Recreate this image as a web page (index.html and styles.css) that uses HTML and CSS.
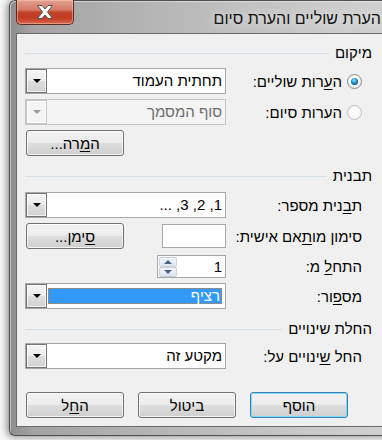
FILE: index.html
```html
<!DOCTYPE html>
<html lang="he">

<head>
    <meta charset="UTF-8">
    <title>הערת שוליים והערת סיום</title>
    <link rel="stylesheet" href="styles.css">
</head>

<body>

    <div class="window">
        <div class="titlebar">
            <div class="close-btn">
                <svg width="18" height="14" viewBox="0 0 18 14">
                    <path d="M1.5 0.5 H6 L9 4 L12 0.5 H16.5 L11.5 7 L16.5 13.5 H12 L9 10 L6 13.5 H1.5 L6.5 7 Z" fill="#fafafa" stroke="#555" stroke-width="1" stroke-linejoin="round" />
                </svg>
            </div>
            <div class="title" dir="rtl">הערת שוליים והערת סיום</div>
        </div>

        <div class="client" dir="rtl">
            <!-- Location -->
            <div class="group-head head-location"><span>מיקום</span><div class="line"></div></div>

            <div class="row row-footnotes">
                <label class="lbl radio-lbl"><span class="radio on"></span><span>ה<u>ע</u>רות שוליים:</span></label>
                <div class="combo">
                    <span class="combo-text">תחתית העמוד</span>
                    <span class="combo-btn"><i class="arrow"></i></span>
                </div>
            </div>

            <div class="row row-endnotes">
                <label class="lbl radio-lbl"><span class="radio off"></span><span>הערות סיום:</span></label>
                <div class="combo disabled">
                    <span class="combo-text">סוף המסמך</span>
                    <span class="combo-btn"><i class="arrow"></i></span>
                </div>
            </div>

            <div class="row row-convert">
                <span class="lbl"></span>
                <div class="ctrl ctrl-left">
                    <button class="btn">ה<u>מ</u>רה...</button>
                </div>
            </div>

            <!-- Format -->
            <div class="group-head head-format"><span>תבנית</span><div class="line"></div></div>

            <div class="row row-numfmt">
                <label class="lbl">ת<u>ב</u>נית מספר:</label>
                <div class="combo">
                    <span class="combo-text">1, 2, 3, ...</span>
                    <span class="combo-btn"><i class="arrow"></i></span>
                </div>
            </div>

            <div class="row row-custom">
                <label class="lbl">סימון מו<u>ת</u>אם אישית:</label>
                <div class="ctrl ctrl-split">
                    <input class="textbox" type="text">
                    <button class="btn"><u>ס</u>ימן...</button>
                </div>
            </div>

            <div class="row row-start">
                <label class="lbl">התח<u>ל</u> מ:</label>
                <div class="ctrl">
                    <div class="spinner">
                        <span class="spin-value">1</span>
                        <span class="spin-btns">
                            <span class="spin up"><i></i></span>
                            <span class="spin down"><i></i></span>
                        </span>
                    </div>
                </div>
            </div>

            <div class="row row-numbering">
                <label class="lbl">מס<u>פ</u>ור:</label>
                <div class="combo">
                    <span class="combo-text"><span class="selected">רציף</span></span>
                    <span class="combo-btn"><i class="arrow"></i></span>
                </div>
            </div>

            <!-- Apply changes -->
            <div class="group-head head-apply"><span>החלת שינויים</span><div class="line"></div></div>

            <div class="row row-apply">
                <label class="lbl">החל <u>ש</u>ינויים על:</label>
                <div class="combo">
                    <span class="combo-text">מקטע זה</span>
                    <span class="combo-btn"><i class="arrow"></i></span>
                </div>
            </div>

            <div class="buttons">
                <button class="btn default">הוסף</button>
                <button class="btn">ביטול</button>
                <button class="btn">ה<u>ח</u>ל</button>
            </div>
        </div>
    </div>

</body>

</html>
```

FILE: styles.css
```css
html,
body {
    margin: 0;
    padding: 0;
    overflow: hidden;
}

body {
    width: 382px;
    height: 440px;
    background-color: #f7f7f7;
    font-family: 'Liberation Sans', 'DejaVu Sans', sans-serif;
    font-size: 15px;
    color: #000;
}

/* window frame */
.window {
    box-sizing: border-box;
    margin-left: 9px;
    width: 392px;
    height: 436px;
    border: 1px solid #4e4e4e;
    border-right: none;
    border-radius: 6px 0 0 6px;
    padding-bottom: 8px;
    display: flex;
    flex-direction: column;
    background: linear-gradient(to right, #8d8d8d 0%, #a3a3a3 6%, #b4b4b4 35%, #c6c6c6 70%, #d2d2d2 100%);
    box-shadow: -2px 1px 7px rgba(0, 0, 0, 0.45), inset 1px 1px 0 rgba(255, 255, 255, 0.45);
}

.titlebar {
    height: 32px;
    display: flex;
    align-items: flex-start;
}

.close-btn {
    box-sizing: border-box;
    margin-left: 6px;
    margin-top: -1px;
    width: 58px;
    height: 25px;
    border: 1px solid #5e2a22;
    border-top: none;
    border-radius: 0 0 5px 5px;
    background: linear-gradient(#e3a091 0%, #d67a68 40%, #c2432a 52%, #c03c23 75%, #d9674c 100%);
    box-shadow: inset 0 0 0 1px rgba(255, 210, 200, 0.45);
    display: flex;
    justify-content: center;
    align-items: center;
}

.title {
    margin-left: auto;
    margin-top: 9px;
    padding-right: 20px;
    font-size: 16px;
    line-height: 18px;
    color: #111;
    white-space: nowrap;
    text-shadow: 0 0 10px rgba(255, 255, 255, 0.9);
}

/* client area */
.client {
    flex: 1;
    margin-left: 6px;
    border: 1px solid #6a6a6a;
    background-color: #f0f0f0;
    padding: 0 20px 0 8px;
    width: 347px;
}

.group-head {
    display: flex;
    align-items: center;
    height: 16px;
    line-height: 16px;
}

.group-head .line {
    flex: 1;
    height: 1px;
    margin-right: 6px;
    background-color: #d5dfe5;
}

.head-location { margin-top: 11px; }
.head-format { margin-top: 12px; }
.head-apply { margin-top: 12px; }

.row {
    display: flex;
    align-items: center;
    height: 26px;
}

.row-footnotes { margin-top: 7px; }
.row-endnotes { margin-top: 5px; }
.row-convert { margin-top: 5px; }
.row-numfmt { margin-top: 8px; }
.row-custom { margin-top: 5px; }
.row-start { margin-top: 6px; height: 23px; }
.row-numbering { margin-top: 5px; }
.row-apply { margin-top: 6px; }

.lbl {
    flex: 1;
    padding-right: 10px;
    white-space: nowrap;
}

.radio-lbl {
    display: flex;
    align-items: center;
    gap: 5px;
}

u {
    text-decoration-thickness: 1px;
    text-underline-offset: 2px;
}

.ctrl {
    width: 201px;
    display: flex;
}

.ctrl-left {
    justify-content: flex-end;
    padding-left: 1px;
    box-sizing: border-box;
}

.ctrl-split {
    justify-content: space-between;
    align-items: center;
    padding-left: 1px;
    box-sizing: border-box;
}

/* radio buttons */
.radio {
    position: relative;
    box-sizing: border-box;
    width: 15px;
    height: 15px;
    border-radius: 50%;
    border: 1px solid #8a8b8c;
    background: radial-gradient(circle at 50% 45%, #ffffff 30%, #e4e4e4 100%);
}

.radio.on::after {
    content: "";
    position: absolute;
    left: 3px;
    top: 3px;
    width: 7px;
    height: 7px;
    border-radius: 50%;
    background: radial-gradient(circle at 45% 35%, #9be3ff 0%, #2a98dc 40%, #0b4f86 75%, #06325a 100%);
}

.radio.off {
    border-color: #c2c2c2;
    background: radial-gradient(circle at 50% 45%, #fbfbfb 30%, #ececec 100%);
}

/* combo boxes */
.combo {
    box-sizing: border-box;
    width: 201px;
    height: 26px;
    border: 1px solid #a5a7ab;
    background-color: #fff;
    display: flex;
}

.combo-text {
    flex: 1;
    padding-right: 3px;
    line-height: 24px;
    white-space: nowrap;
}

.combo-btn {
    box-sizing: border-box;
    width: 21px;
    height: 24px;
    border: 1px solid #747474;
    background: linear-gradient(#f4f4f4 0%, #ececec 50%, #dedede 51%, #d2d2d2 100%);
    box-shadow: inset 0 0 0 1px rgba(255, 255, 255, 0.7);
    display: flex;
    justify-content: center;
    align-items: center;
}

.arrow {
    width: 0;
    height: 0;
    border-left: 4px solid transparent;
    border-right: 4px solid transparent;
    border-top: 4px solid #000;
}

.combo.disabled {
    border-color: #c3c3c3;
    background-color: #f4f4f4;
    color: #6d6d6d;
}

.combo.disabled .combo-btn {
    border-color: #c6c6c6;
    background: #f4f4f4;
}

.combo.disabled .arrow {
    border-top-color: #9a9a9a;
}

.selected {
    display: block;
    box-sizing: border-box;
    margin: 4px 0 4px 1px;
    height: 16px;
    line-height: 14px;
    padding-right: 1px;
    background-color: #3399ff;
    color: #fff;
    border: 1px dotted #d9822b;
}

/* text box and spinner */
.textbox {
    box-sizing: border-box;
    width: 64px;
    height: 24px;
    margin: 0;
    border: 1px solid #a5a7ab;
    background-color: #fff;
    font: inherit;
}

.spinner {
    box-sizing: border-box;
    width: 69px;
    height: 23px;
    border: 1px solid #a5a7ab;
    background-color: #fff;
    display: flex;
    align-items: center;
}

.spin-value {
    flex: 1;
    padding-right: 3px;
}

.spin-btns {
    display: flex;
    flex-direction: column;
    margin-left: 1px;
}

.spin {
    box-sizing: border-box;
    width: 18px;
    height: 10px;
    border: 1px solid #c9d0da;
    border-radius: 2px;
    background: linear-gradient(#f3f6fa, #dfe5ee);
    display: flex;
    justify-content: center;
    align-items: center;
}

.spin i {
    width: 0;
    height: 0;
    border-left: 4px solid transparent;
    border-right: 4px solid transparent;
}

.spin.up i {
    border-bottom: 4px solid #4d6185;
}

.spin.down i {
    border-top: 4px solid #4d6185;
}

/* push buttons */
.btn {
    box-sizing: border-box;
    width: 98px;
    height: 26px;
    margin: 0;
    padding: 0;
    border: 1px solid #707070;
    border-radius: 3px;
    background: linear-gradient(#f2f2f2 0%, #ebebeb 50%, #dddddd 51%, #cfcfcf 100%);
    box-shadow: inset 0 0 0 1px rgba(255, 255, 255, 0.75);
    font: inherit;
    color: #000;
    text-align: center;
}

.btn.default {
    border-color: #3c7fb1;
    box-shadow: inset 0 0 0 1px #7fdcf8;
}

.buttons {
    margin-top: 23px;
    display: flex;
    justify-content: flex-end;
    gap: 14px;
    padding-left: 1px;
}
```
